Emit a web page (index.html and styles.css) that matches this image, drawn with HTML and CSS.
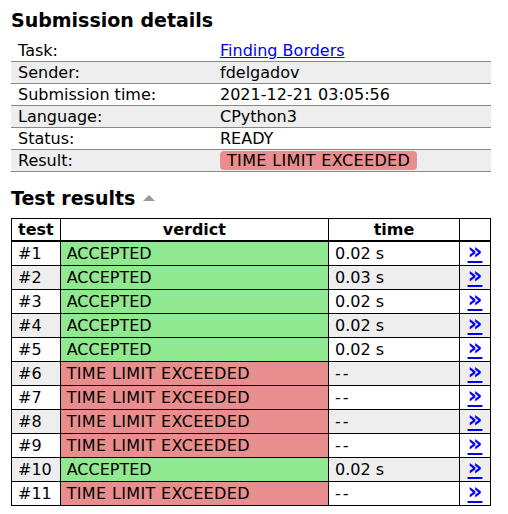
FILE: index.html
```html
<!DOCTYPE html>
<html>
<head>
<meta charset="utf-8">
<link rel="stylesheet" href="styles.css">
</head>
<body>
<div class="content">
  <h2 class="title">Submission details</h2>
  <table class="summary">
    <tr><td class="label">Task:</td><td><a href="#">Finding Borders</a></td></tr>
    <tr class="alt"><td class="label">Sender:</td><td>fdelgadov</td></tr>
    <tr><td class="label">Submission time:</td><td>2021-12-21 03:05:56</td></tr>
    <tr class="alt"><td class="label">Language:</td><td>CPython3</td></tr>
    <tr><td class="label">Status:</td><td>READY</td></tr>
    <tr class="alt"><td class="label">Result:</td><td><span class="badge">TIME LIMIT EXCEEDED</span></td></tr>
  </table>
  <h2 class="title results-title">Test results <span class="toggle"></span></h2>
  <table class="tests">
    <tr><th class="c-test">test</th><th class="c-verdict">verdict</th><th class="c-time">time</th><th class="c-link"></th></tr>
    <tr><td>#1</td><td class="ac">ACCEPTED</td><td>0.02 s</td><td class="c-link"><a href="#">»</a></td></tr>
    <tr class="alt"><td>#2</td><td class="ac">ACCEPTED</td><td>0.03 s</td><td class="c-link"><a href="#">»</a></td></tr>
    <tr><td>#3</td><td class="ac">ACCEPTED</td><td>0.02 s</td><td class="c-link"><a href="#">»</a></td></tr>
    <tr class="alt"><td>#4</td><td class="ac">ACCEPTED</td><td>0.02 s</td><td class="c-link"><a href="#">»</a></td></tr>
    <tr><td>#5</td><td class="ac">ACCEPTED</td><td>0.02 s</td><td class="c-link"><a href="#">»</a></td></tr>
    <tr class="alt"><td>#6</td><td class="tle">TIME LIMIT EXCEEDED</td><td class="dash">--</td><td class="c-link"><a href="#">»</a></td></tr>
    <tr><td>#7</td><td class="tle">TIME LIMIT EXCEEDED</td><td class="dash">--</td><td class="c-link"><a href="#">»</a></td></tr>
    <tr class="alt"><td>#8</td><td class="tle">TIME LIMIT EXCEEDED</td><td class="dash">--</td><td class="c-link"><a href="#">»</a></td></tr>
    <tr><td>#9</td><td class="tle">TIME LIMIT EXCEEDED</td><td class="dash">--</td><td class="c-link"><a href="#">»</a></td></tr>
    <tr class="alt"><td>#10</td><td class="ac">ACCEPTED</td><td>0.02 s</td><td class="c-link"><a href="#">»</a></td></tr>
    <tr><td>#11</td><td class="tle">TIME LIMIT EXCEEDED</td><td class="dash">--</td><td class="c-link"><a href="#">»</a></td></tr>
  </table>
</div>
</body>
</html>
```
FILE: styles.css
```css
html, body {
  margin: 0;
  padding: 0;
  background: #fff;
}
body {
  font-family: "DejaVu Sans", Verdana, sans-serif;
  font-size: 16px;
  color: #000;
}
.content {
  width: 480px;
  padding: 8px 0 0 11px;
}
.title {
  font-size: 19px;
  font-weight: bold;
  margin: 0 0 8px 0;
  line-height: 24px;
}
.results-title {
  margin-top: 14px;
  margin-bottom: 8px;
}
.toggle {
  display: inline-block;
  width: 0;
  height: 0;
  border-left: 6px solid transparent;
  border-right: 6px solid transparent;
  border-bottom: 6px solid #999;
  vertical-align: middle;
  margin-left: 1px;
  position: relative;
  top: -2px;
}
table {
  border-collapse: collapse;
  width: 480px;
}
.summary td {
  padding: 1px 7px 1px 7px;
  line-height: 19px;
  border-bottom: 1px solid #888;
}
.summary .label {
  width: 188px;
}
.summary .alt td, .tests .alt td {
  background: #eee;
}
a {
  color: #0000ee;
  text-decoration: underline;
}
.badge {
  background: #e88e8e;
  border-radius: 4px;
  padding: 0 7px;
  letter-spacing: 0.35px;
}
.tests th, .tests td {
  border: 1px solid #000;
  padding: 2px 6px;
  line-height: 19px;
  text-align: left;
}
.tests th {
  text-align: center;
  font-weight: bold;
  padding: 1px 6px;
  border-bottom: 2px solid #000;
}
.c-test { width: 35px; }
.c-time { width: 118px; }
.c-link { width: 18px; }
.tests td.c-link {
  text-align: center;
  font-weight: bold;
  padding: 0 4px;
}
.tests td.c-link a {
  font-size: 23px;
  line-height: 19px;
  position: relative;
  top: -1px;
}
.tests td.dash {
  letter-spacing: 2px;
}
.tests .alt td.ac, .tests td.ac {
  background: #90e890;
}
.tests .alt td.tle, .tests td.tle {
  background: #e88e8e;
  letter-spacing: 0.35px;
}
```
